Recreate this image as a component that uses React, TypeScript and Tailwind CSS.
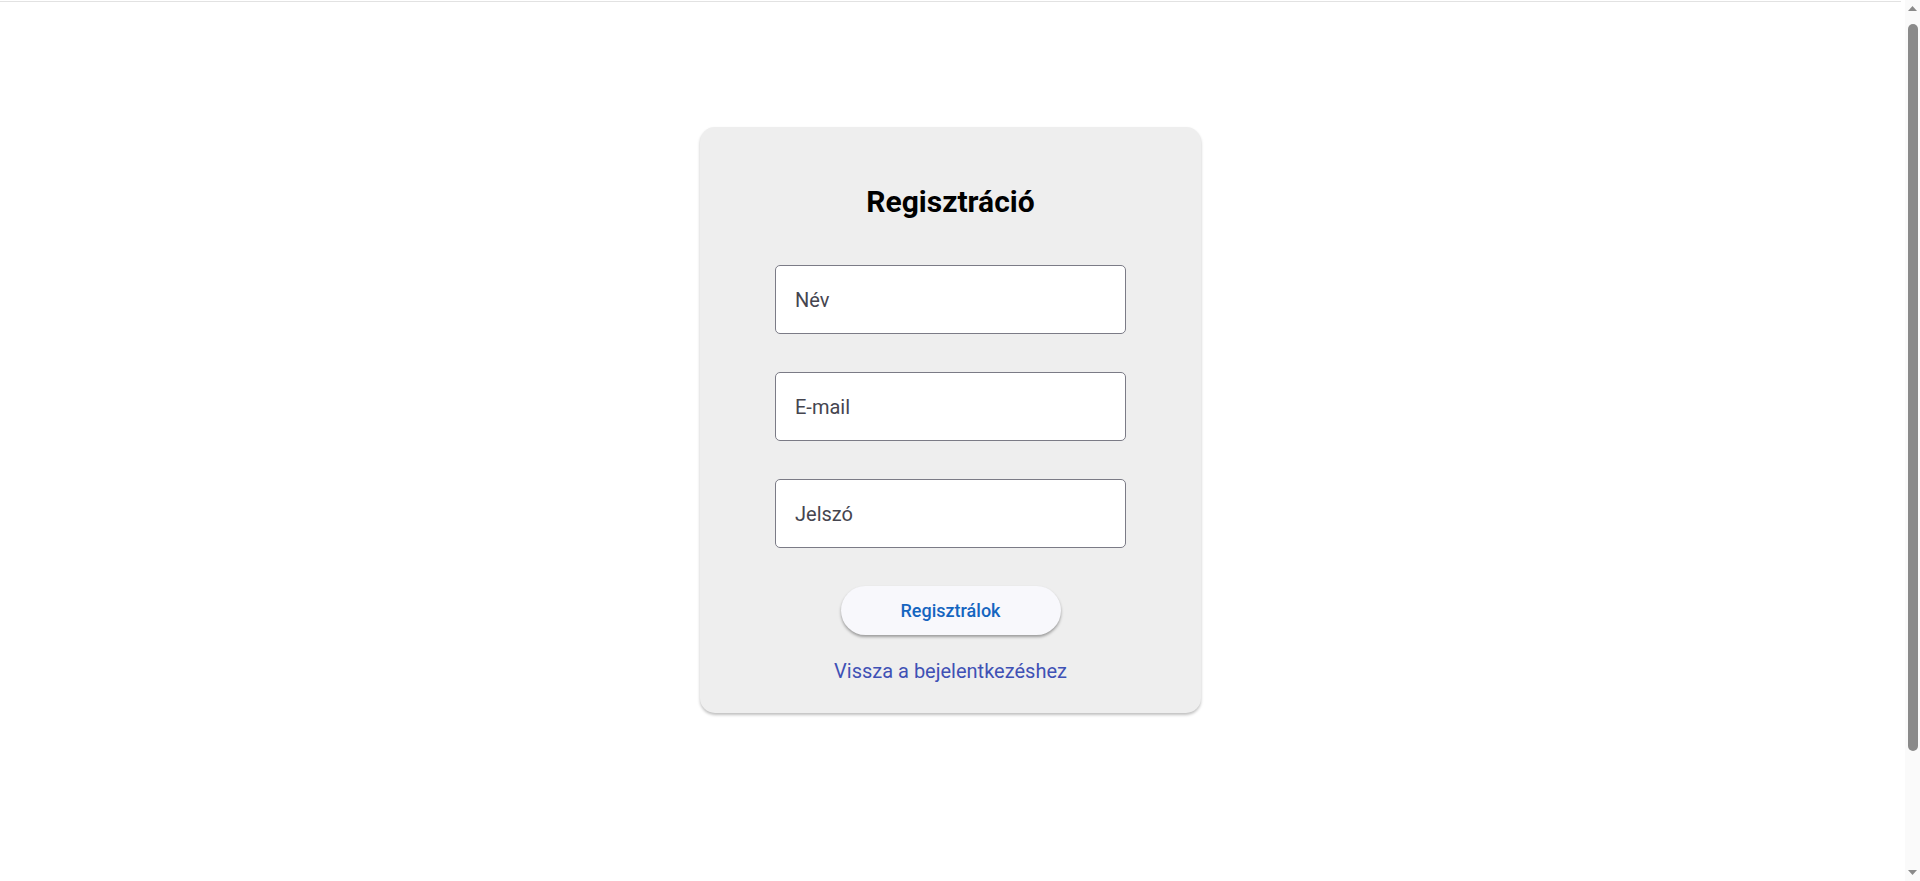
import { useState } from 'react';

function TextField({ placeholder, type, value, onChange }: { placeholder: string; type: string; value: string; onChange: (v: string) => void }) {
  return (
    <input
      className="w-[351px] h-[69px] px-[19px] bg-white border border-[#7b7b86] rounded-[5px] text-[20px] text-[#333] placeholder:text-[#45454f] outline-none"
      placeholder={ placeholder }
      type={ type }
      value={ value }
      onChange={ (e) => onChange(e.target.value) }
    />
  );
}

function FakeScrollbar() {
  return (
    <div className="fixed top-0 right-0 w-[15px] h-[881px] bg-[#fafafa] flex flex-col items-center">
      <svg width="11" height="15" viewBox="0 0 11 15" className="mt-[1px]">
        <path d="M1 10 L5.5 5 L10 10 Z" fill="#8a8a8a" />
      </svg>
      <div className="w-[10px] h-[727px] mt-[8px] rounded-full bg-[#8a8a8a]" />
      <div className="flex-1" />
      <svg width="11" height="15" viewBox="0 0 11 15" className="mb-[1px]">
        <path d="M1 5 L10 5 L5.5 10 Z" fill="#8a8a8a" />
      </svg>
    </div>
  );
}

export default function App() {
  const [name, setName] = useState('');
  const [email, setEmail] = useState('');
  const [password, setPassword] = useState('');

  return (
    <div className="min-h-[1031px] bg-white font-['Roboto',sans-serif] pr-[19px]">
      <div className="h-px mt-px bg-[#e2e2e2]" />
      <div className="flex justify-center pt-[125px]">
        <div className="w-[501px] flex flex-col items-center pt-[57px] pb-[28px] bg-[#eeeeee] rounded-[15px] shadow-[0_2px_3px_rgba(0,0,0,0.25)]">
          <h1 className="text-[30px] leading-[36px] font-bold text-black">Regisztráció</h1>

          <form className="flex flex-col items-center gap-[38px] mt-[45px]" onSubmit={ (e) => e.preventDefault() }>
            <TextField placeholder="Név" type="text" value={ name } onChange={ setName } />
            <TextField placeholder="E-mail" type="email" value={ email } onChange={ setEmail } />
            <TextField placeholder="Jelszó" type="password" value={ password } onChange={ setPassword } />

            <button
              type="submit"
              className="w-[220px] h-[49px] rounded-full bg-[#f8f8fc] text-[#1565c0] text-[18px] font-medium shadow-[0_2px_3px_rgba(0,0,0,0.35)]"
            >
              Regisztrálok
            </button>
          </form>

          <a href="#" className="mt-[22px] text-[20px] leading-[28px] text-[#3f51b5]">Vissza a bejelentkezéshez</a>
        </div>
      </div>
      <FakeScrollbar />
    </div>
  );
}
